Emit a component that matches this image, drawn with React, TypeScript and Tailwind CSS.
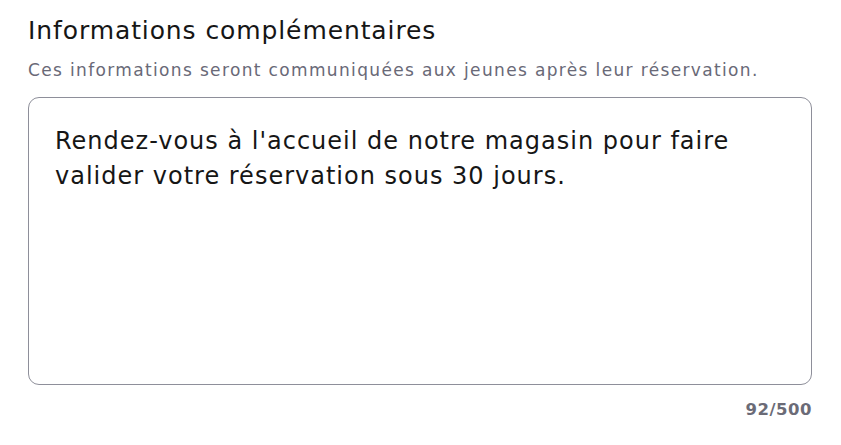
import React from 'react';

const text = "Rendez-vous à l'accueil de notre magasin pour faire valider votre réservation sous 30 jours.";

export default function App() {
    return (
        <div className="w-[841px] h-[445px] bg-white px-[28px] pt-[16px] text-[#161616]" style={{ fontFamily: '"DejaVu Sans", "Noto Sans", sans-serif' }}>
            <h2 className="text-[25px] leading-[30px] tracking-[0.9px]">Informations complémentaires</h2>
            <p className="mt-[14px] text-[17px] leading-[20px] text-[#696977] tracking-[1.35px]">
                Ces informations seront communiquées aux jeunes après leur réservation.
            </p>
            <div className="mt-[17px] w-[784px] h-[288px] rounded-[11px] border-[1.5px] border-[#8e8f9a] px-[26px] pt-[26px]">
                <p className="text-[24px] leading-[35px] tracking-[1px]">{text}</p>
            </div>
            <div className="mt-[14px] w-[784px] text-right text-[16.5px] leading-[22px] font-bold tracking-[0.5px] text-[#6b6b77]">
                {text.length}/500
            </div>
        </div>
    );
}
